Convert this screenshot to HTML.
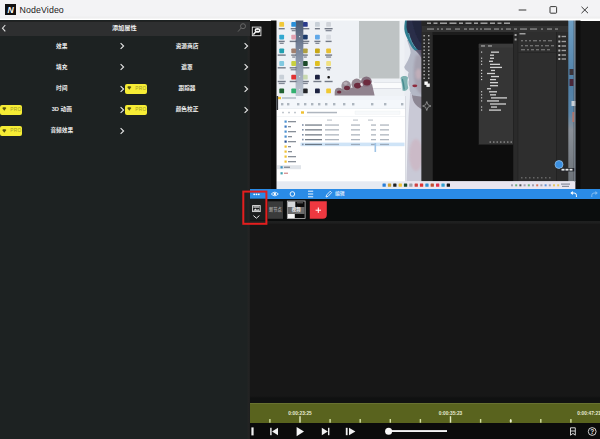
<!DOCTYPE html>
<html><head><meta charset="utf-8">
<style>
html,body{margin:0;padding:0;}
body{width:600px;height:439px;overflow:hidden;background:#161616;position:relative;font-family:"Liberation Sans","Noto Sans CJK SC",sans-serif;}
.abs{position:absolute;}
#title{left:0;top:0;width:600px;height:20.5px;background:linear-gradient(#f3f3f5,#f3f3f5 16px,#efeff0 17px,#efeff0 18.3px,#ffffff 18.9px,#ffffff);}
#title .name{left:19.6px;top:2.6px;font-size:8.8px;color:#1a1a1a;line-height:14px;letter-spacing:0.1px}
#left{left:0;top:20px;width:250px;height:419px;background:linear-gradient(90deg,#1d2222,#1d2222 247.3px,#232424 247.8px,#222323 249.4px,#161616 250px);}
#lhead{left:0;top:20.5px;width:249.5px;height:15.5px;background:linear-gradient(#1f2020,#222323 0.8px,#2e2f30 1.3px,#2e2f30);}
.lt{color:#f0f0f0;font-size:5.7px;line-height:8px;font-weight:bold;white-space:nowrap;transform:translateX(-50%);}
.pro{width:22.3px;height:10px;background:#f6ec35;border-radius:2px;}
.pro span{position:absolute;left:10.2px;top:2.2px;font-size:4.8px;line-height:6px;color:#a39c2a;letter-spacing:0.3px}
#mid{left:249.5px;top:20.5px;width:350.5px;height:170px;background:#161616;}
#blue{left:249.7px;top:188.8px;width:351px;height:10.3px;background:#2a8be6;}
#layer{left:249.7px;top:199px;width:351px;height:21.6px;background:#0b0d0d;}
#tl{left:249.7px;top:220.6px;width:351px;height:183px;background:linear-gradient(#1f2020,#1e1f1f 2px,#171717 3.5px,#171717 175px,#101111 177px,#101111);}
#ruler{left:249.7px;top:403.4px;width:351px;height:19.3px;background:#59631e;border-top:0.8px solid #687230;box-sizing:border-box}
.rl{top:410.6px;transform:translateX(-50%);font-size:4.8px;line-height:6px;color:#e6ead2;white-space:nowrap;font-weight:bold}
#ctrl{left:249.7px;top:422.7px;width:351px;height:16.3px;background:#0b0b0b;}
</style></head><body>
<div id="title" class="abs"><div class="abs name">NodeVideo</div></div>
<div id="left" class="abs"></div>
<div id="lhead" class="abs"></div>
<div class="abs lt" style="left:124.3px;top:24px;font-size:6.2px;color:#f0f0f0">添加属性</div>
<svg class="abs" style="left:1px;top:24px" width="6" height="9" viewBox="0 0 6 9"><polyline points="4.3,1 1.5,4.2 4.3,7.4" fill="none" stroke="#e0e0e0" stroke-width="1.1"/></svg>
<div class="abs lt" style="left:61.8px;top:41.6px">效果</div>
<svg class="abs" style="left:118.7px;top:42.1px" width="6" height="8" viewBox="0 0 6 8"><polyline points="1.6,1.2 4.6,4 1.6,6.8" fill="none" stroke="#e8e8e8" stroke-width="1.1"/></svg>
<div class="abs lt" style="left:187px;top:41.6px">资源商店</div>
<svg class="abs" style="left:243px;top:42.1px" width="6" height="8" viewBox="0 0 6 8"><polyline points="1.6,1.2 4.6,4 1.6,6.8" fill="none" stroke="#e8e8e8" stroke-width="1.1"/></svg>
<div class="abs lt" style="left:61.8px;top:62.9px">填充</div>
<svg class="abs" style="left:118.7px;top:63.4px" width="6" height="8" viewBox="0 0 6 8"><polyline points="1.6,1.2 4.6,4 1.6,6.8" fill="none" stroke="#e8e8e8" stroke-width="1.1"/></svg>
<div class="abs lt" style="left:187px;top:62.9px">遮罩</div>
<svg class="abs" style="left:243px;top:63.4px" width="6" height="8" viewBox="0 0 6 8"><polyline points="1.6,1.2 4.6,4 1.6,6.8" fill="none" stroke="#e8e8e8" stroke-width="1.1"/></svg>
<div class="abs lt" style="left:61.8px;top:84.1px">时间</div>
<svg class="abs" style="left:118.7px;top:84.6px" width="6" height="8" viewBox="0 0 6 8"><polyline points="1.6,1.2 4.6,4 1.6,6.8" fill="none" stroke="#e8e8e8" stroke-width="1.1"/></svg>
<div class="abs lt" style="left:187px;top:84.1px">跟踪器</div>
<svg class="abs" style="left:243px;top:84.6px" width="6" height="8" viewBox="0 0 6 8"><polyline points="1.6,1.2 4.6,4 1.6,6.8" fill="none" stroke="#e8e8e8" stroke-width="1.1"/></svg>
<div class="abs pro" style="left:125px;top:83.7px"><svg class="abs" style="left:2.2px;top:2.8px" width="4.6" height="4.6" viewBox="0 0 6 6"><path d="M0.3,1.2 L5.7,1.2 L3,4.9 Z M1.6,0.2 L4.4,0.2 L5.7,1.2 L0.3,1.2 Z" fill="#5a5510"/></svg><span>PRO</span></div>
<div class="abs lt" style="left:61.8px;top:105.1px">3D 动画</div>
<svg class="abs" style="left:118.7px;top:105.6px" width="6" height="8" viewBox="0 0 6 8"><polyline points="1.6,1.2 4.6,4 1.6,6.8" fill="none" stroke="#e8e8e8" stroke-width="1.1"/></svg>
<div class="abs lt" style="left:187px;top:105.1px">颜色校正</div>
<svg class="abs" style="left:243px;top:105.6px" width="6" height="8" viewBox="0 0 6 8"><polyline points="1.6,1.2 4.6,4 1.6,6.8" fill="none" stroke="#e8e8e8" stroke-width="1.1"/></svg>
<div class="abs pro" style="left:0px;top:104.7px"><svg class="abs" style="left:2.2px;top:2.8px" width="4.6" height="4.6" viewBox="0 0 6 6"><path d="M0.3,1.2 L5.7,1.2 L3,4.9 Z M1.6,0.2 L4.4,0.2 L5.7,1.2 L0.3,1.2 Z" fill="#5a5510"/></svg><span>PRO</span></div>
<div class="abs pro" style="left:125px;top:104.7px"><svg class="abs" style="left:2.2px;top:2.8px" width="4.6" height="4.6" viewBox="0 0 6 6"><path d="M0.3,1.2 L5.7,1.2 L3,4.9 Z M1.6,0.2 L4.4,0.2 L5.7,1.2 L0.3,1.2 Z" fill="#5a5510"/></svg><span>PRO</span></div>
<div class="abs lt" style="left:61.8px;top:126.2px">音频效果</div>
<svg class="abs" style="left:118.7px;top:126.7px" width="6" height="8" viewBox="0 0 6 8"><polyline points="1.6,1.2 4.6,4 1.6,6.8" fill="none" stroke="#e8e8e8" stroke-width="1.1"/></svg>
<div class="abs pro" style="left:0px;top:125.80000000000001px"><svg class="abs" style="left:2.2px;top:2.8px" width="4.6" height="4.6" viewBox="0 0 6 6"><path d="M0.3,1.2 L5.7,1.2 L3,4.9 Z M1.6,0.2 L4.4,0.2 L5.7,1.2 L0.3,1.2 Z" fill="#5a5510"/></svg><span>PRO</span></div>
<div id="mid" class="abs"></div>
<!--PV-->
<svg class="abs" id="pv" style="left:0;top:0" width="600" height="439" viewBox="0 0 600 439">
<defs>
<linearGradient id="gstripe" x1="0" y1="0" x2="0" y2="1"><stop offset="0" stop-color="#44546e"/><stop offset="0.5" stop-color="#8793a8"/><stop offset="1" stop-color="#c3cad4"/></linearGradient>
<linearGradient id="gskin" x1="0" y1="0" x2="0" y2="1"><stop offset="0" stop-color="#b4c0cc"/><stop offset="0.35" stop-color="#c6c8d2"/><stop offset="0.5" stop-color="#9a8e98"/><stop offset="0.62" stop-color="#cfccd6"/><stop offset="1" stop-color="#d8ccd4"/></linearGradient>
<linearGradient id="gphoto" x1="0" y1="0" x2="0" y2="1"><stop offset="0" stop-color="#6f9fc4"/><stop offset="0.4" stop-color="#4f7fa6"/><stop offset="0.58" stop-color="#5a86aa"/><stop offset="0.68" stop-color="#8a9098"/><stop offset="1" stop-color="#6c7278"/></linearGradient>
<filter id="b1"><feGaussianBlur stdDeviation="0.5"/></filter>
<filter id="b2"><feGaussianBlur stdDeviation="1.2"/></filter>
<filter id="b3"><feGaussianBlur stdDeviation="0.7"/></filter>
<filter id="b0"><feGaussianBlur stdDeviation="0.35"/></filter>
<clipPath id="pvclip"><rect x="271" y="20.5" width="309.5" height="168.5"/></clipPath>
</defs>
<g clip-path="url(#pvclip)"><g filter="url(#b0)">
<rect x="270" y="18" width="154" height="173" fill="#eef1f5"/>
<rect x="295.6" y="18" width="7.6" height="79" fill="url(#gstripe)"/>
<rect x="359" y="21" width="40.5" height="57.5" fill="#bec3c4"/>
<rect x="404.5" y="18" width="19" height="165" fill="#e9ecf2"/>
<path d="M410,93 C410,100 409,108 408.5,118 C408,135 407,160 406.5,183 L424,183 L424,93 Z" fill="#c9c9d6" filter="url(#b1)"/>
<path d="M412,93 C412,100 414,106 424,110 L424,93 Z" fill="#8d8794" filter="url(#b1)"/>
<ellipse cx="416" cy="155" rx="7" ry="16" fill="#ccb6c2" opacity="0.75" filter="url(#b2)"/>
<path d="M407,40 C409,46 410.8,50 410.6,53 C409.5,58 406.5,63 404.2,67 C404.8,70 407.5,71 408.6,72.3 C407.6,75 407.8,77.5 409,79.5 C408,82.5 408.6,85 409.6,87 C409,90.5 410.5,93.5 413,95.5 L424,97 L424,40 Z" fill="#b4b8c6" filter="url(#b1)"/>
<path d="M416,55 C414,62 413,70 414,80 C415,88 418,93 424,96 L424,55 Z" fill="#a09aa8" opacity="0.7" filter="url(#b2)"/>
<ellipse cx="418.5" cy="74" rx="3.2" ry="5.5" fill="#c9b2bc" opacity="0.75" filter="url(#b2)"/>
<path d="M405.4,18 L424,18 L424,60 C421.5,57 419.5,53 416.5,51 C414,50.5 411.5,47.5 409.5,43 C407,38 404.4,33 404.3,29 C404.2,25 405,21 405.4,18 Z" fill="#2f7f92" filter="url(#b1)"/>
<path d="M407,18 L424,18 L424,58 C421.5,55 420,51 417,49 C414.5,48 412.5,45 411,41 C408.5,35 406.6,30 406.5,27 C406.4,24 406.8,21 407,18 Z" fill="#2a2e4a" filter="url(#b1)"/>
<path d="M412,20 C414,30 416,38 424,48 L424,20 Z" fill="#23253e" filter="url(#b1)"/>
<path d="M408.6,33 C410,39 412.5,44.5 416,48.5" stroke="#6cc4d4" stroke-width="0.9" fill="none" opacity="0.85" filter="url(#b1)"/>
<path d="M415,50 C418,53 421,57 424,62 L424,50 Z" fill="#6a5a70" opacity="0.8" filter="url(#b1)"/>
<ellipse cx="414.8" cy="85.8" rx="2.5" ry="1.4" fill="#8e2a3c" filter="url(#b1)"/>
<rect x="372" y="82.6" width="29" height="5.6" fill="#fafbfc" opacity="0.95"/>
<rect x="372" y="88" width="29" height="0.7" fill="#cdd0d8" opacity="0.9"/>
<rect x="374" y="82.3" width="27" height="0.6" fill="#d4d8de" opacity="0.9"/>
<path d="M400.5,78 C402,75.5 406,75.5 408,77.5 C407,81 407.5,85 408.3,88 C407,91 404,91.5 402.5,90.5 C402.5,86 401.5,82 400.5,78 Z" fill="#7fb2b2" filter="url(#b1)"/>
<path d="M402.3,79 C403.5,83 404,86.5 404.2,89.5" stroke="#3f868c" stroke-width="1.4" fill="none" opacity="0.85" filter="url(#b1)"/>
<g filter="url(#b3)">
<path d="M334.7,92 C337,88 341,88 344,89.5 L350,88 L372,84 L374.6,95.6 L334.7,95.6 Z" fill="#90828e"/>
<ellipse cx="338.7" cy="91.3" rx="3.8" ry="3.6" fill="#8f858d"/>
<ellipse cx="346.2" cy="86" rx="4.8" ry="5.4" fill="#9a9099"/>
<ellipse cx="356.7" cy="84.2" rx="5.2" ry="5.6" fill="#94868f"/>
<ellipse cx="366.4" cy="81.6" rx="5.4" ry="5.2" fill="#84707e"/>
<ellipse cx="339.2" cy="92" rx="2.2" ry="1.6" fill="#6c2a3e"/>
<ellipse cx="347" cy="88" rx="3" ry="2.2" fill="#6c2a3e"/>
<ellipse cx="357.6" cy="85.6" rx="3.6" ry="2.8" fill="#6c2a3e"/>
<ellipse cx="367" cy="82.6" rx="3.8" ry="3" fill="#6c2a3e"/>
<ellipse cx="361.5" cy="84.5" rx="1.2" ry="1.4" fill="#e8dce2"/>
<ellipse cx="345.5" cy="83.5" rx="2" ry="1.4" fill="#b8aeb6"/>
</g>
<rect x="279.3" y="22.0" width="4.8" height="4.8" rx="0.9" fill="#f0c838"/>
<rect x="278.7" y="28.0" width="6" height="1.4" fill="#4a5262" opacity="0.75"/>
<rect x="291.3" y="22.0" width="4.8" height="4.8" rx="0.9" fill="#2a8fd8"/>
<rect x="290.7" y="28.0" width="6" height="1.4" fill="#4a5262" opacity="0.75"/>
<rect x="291.7" y="30.0" width="4" height="1.3" fill="#4a5262" opacity="0.65"/>
<rect x="302.9" y="22.0" width="4.8" height="4.8" rx="0.9" fill="#2a3a8c"/>
<rect x="301.3" y="28.0" width="8" height="1.4" fill="#4a5262" opacity="0.75"/>
<rect x="315.0" y="22.0" width="4.8" height="4.8" rx="0.9" fill="#c8d0d8"/>
<rect x="314.9" y="28.0" width="5" height="1.4" fill="#4a5262" opacity="0.75"/>
<rect x="326.2" y="22.0" width="4.8" height="4.8" rx="0.9" fill="#d0d4da"/>
<rect x="324.6" y="28.0" width="8" height="1.4" fill="#4a5262" opacity="0.75"/>
<rect x="325.6" y="30.0" width="6" height="1.3" fill="#4a5262" opacity="0.65"/>
<rect x="279.3" y="34.7" width="4.8" height="4.8" rx="0.9" fill="#30a8d0"/>
<rect x="278.7" y="40.7" width="6" height="1.4" fill="#4a5262" opacity="0.75"/>
<rect x="279.7" y="42.7" width="4" height="1.3" fill="#4a5262" opacity="0.65"/>
<rect x="291.3" y="34.7" width="4.8" height="4.8" rx="0.9" fill="#e0a0b0"/>
<rect x="289.7" y="40.7" width="8" height="1.4" fill="#4a5262" opacity="0.75"/>
<rect x="302.9" y="34.7" width="4.8" height="4.8" rx="0.9" fill="#1a3a6c"/>
<rect x="301.3" y="40.7" width="8" height="1.4" fill="#4a5262" opacity="0.75"/>
<rect x="302.3" y="42.7" width="6" height="1.3" fill="#4a5262" opacity="0.65"/>
<rect x="315.0" y="34.7" width="4.8" height="4.8" rx="0.9" fill="#60a8e8"/>
<rect x="314.4" y="40.7" width="6" height="1.4" fill="#4a5262" opacity="0.75"/>
<rect x="315.4" y="42.7" width="4" height="1.3" fill="#4a5262" opacity="0.65"/>
<rect x="326.2" y="34.7" width="4.8" height="4.8" rx="0.9" fill="#d8dce2"/>
<rect x="325.6" y="40.7" width="6" height="1.4" fill="#4a5262" opacity="0.75"/>
<rect x="279.3" y="48.4" width="4.8" height="4.8" rx="0.9" fill="#20a0b0"/>
<rect x="277.7" y="54.4" width="8" height="1.4" fill="#4a5262" opacity="0.75"/>
<rect x="291.3" y="48.4" width="4.8" height="4.8" rx="0.9" fill="#a08070"/>
<rect x="291.2" y="54.4" width="5" height="1.4" fill="#4a5262" opacity="0.75"/>
<rect x="292.2" y="56.4" width="3" height="1.3" fill="#4a5262" opacity="0.65"/>
<rect x="302.9" y="48.4" width="4.8" height="4.8" rx="0.9" fill="#b0a040"/>
<rect x="302.8" y="54.4" width="5" height="1.4" fill="#4a5262" opacity="0.75"/>
<rect x="303.8" y="56.4" width="3" height="1.3" fill="#4a5262" opacity="0.65"/>
<rect x="315.0" y="48.4" width="4.8" height="4.8" rx="0.9" fill="#c8a818"/>
<rect x="314.9" y="54.4" width="5" height="1.4" fill="#4a5262" opacity="0.75"/>
<rect x="326.2" y="48.4" width="4.8" height="4.8" rx="0.9" fill="#e8c030"/>
<rect x="325.1" y="54.4" width="7" height="1.4" fill="#4a5262" opacity="0.75"/>
<rect x="326.1" y="56.4" width="5" height="1.3" fill="#4a5262" opacity="0.65"/>
<rect x="279.3" y="61.1" width="4.8" height="4.8" rx="0.9" fill="#80c8e0"/>
<rect x="277.7" y="67.1" width="8" height="1.4" fill="#4a5262" opacity="0.75"/>
<rect x="291.3" y="61.1" width="4.8" height="4.8" rx="0.9" fill="#c8d040"/>
<rect x="289.7" y="67.1" width="8" height="1.4" fill="#4a5262" opacity="0.75"/>
<rect x="290.7" y="69.1" width="6" height="1.3" fill="#4a5262" opacity="0.65"/>
<rect x="302.9" y="61.1" width="4.8" height="4.8" rx="0.9" fill="#1c4a2c"/>
<rect x="301.3" y="67.1" width="8" height="1.4" fill="#4a5262" opacity="0.75"/>
<rect x="315.0" y="61.1" width="4.8" height="4.8" rx="0.9" fill="#e0c020"/>
<rect x="314.4" y="67.1" width="6" height="1.4" fill="#4a5262" opacity="0.75"/>
<rect x="326.2" y="61.1" width="4.8" height="4.8" rx="0.9" fill="#f0e080"/>
<rect x="326.1" y="67.1" width="5" height="1.4" fill="#4a5262" opacity="0.75"/>
<rect x="327.1" y="69.1" width="3" height="1.3" fill="#4a5262" opacity="0.65"/>
<rect x="279.3" y="74.8" width="4.8" height="4.8" rx="0.9" fill="#c8d0d8"/>
<rect x="277.7" y="80.8" width="8" height="1.4" fill="#4a5262" opacity="0.75"/>
<rect x="278.7" y="82.8" width="6" height="1.3" fill="#4a5262" opacity="0.65"/>
<rect x="291.3" y="74.8" width="4.8" height="4.8" rx="0.9" fill="#e03030"/>
<rect x="289.7" y="80.8" width="8" height="1.4" fill="#4a5262" opacity="0.75"/>
<rect x="302.9" y="74.8" width="4.8" height="4.8" rx="0.9" fill="#c8d8b0"/>
<rect x="301.8" y="80.8" width="7" height="1.4" fill="#4a5262" opacity="0.75"/>
<rect x="302.8" y="82.8" width="5" height="1.3" fill="#4a5262" opacity="0.65"/>
<rect x="315.0" y="74.8" width="4.8" height="4.8" rx="0.9" fill="#1a2040"/>
<rect x="313.4" y="80.8" width="8" height="1.4" fill="#4a5262" opacity="0.75"/>
<rect x="327.4" y="76.0" width="2.5" height="2.5" rx="0.9" fill="#181818"/>
<rect x="324.6" y="80.8" width="8" height="1.4" fill="#4a5262" opacity="0.75"/>
<rect x="279.3" y="88.5" width="4.8" height="4.8" rx="0.9" fill="#206030"/>
<rect x="291.3" y="88.5" width="4.8" height="4.8" rx="0.9" fill="#30b070"/>
<rect x="302.9" y="88.5" width="4.8" height="4.8" rx="0.9" fill="#202428"/>
<rect x="315.0" y="88.5" width="4.8" height="4.8" rx="0.9" fill="#1a2040"/>
<rect x="326.2" y="88.5" width="4.8" height="4.8" rx="0.9" fill="#f0c830"/>
<rect x="296.4" y="18" width="6.8" height="79" fill="url(#gstripe)" opacity="0.85"/>
<rect x="299" y="36" width="1.2" height="1.2" fill="#e8ecf0" opacity="0.8"/>
<rect x="299" y="49" width="1.2" height="1.2" fill="#e8ecf0" opacity="0.8"/>
<rect x="299" y="62" width="1.2" height="1.2" fill="#e8ecf0" opacity="0.8"/>
<rect x="299" y="76" width="1.2" height="1.2" fill="#e8ecf0" opacity="0.8"/>
<rect x="299" y="89" width="1.2" height="1.2" fill="#e8ecf0" opacity="0.8"/>
<rect x="276.5" y="96" width="129" height="86" fill="#ffffff"/>
<rect x="276.5" y="96" width="129" height="4" fill="#f1f4f9"/>
<rect x="276.5" y="100" width="129" height="8.5" fill="#f4f7fb"/>
<rect x="276.5" y="108.3" width="129" height="0.5" fill="#dfe4ea"/>
<rect x="276.5" y="116.5" width="129" height="0.5" fill="#e6eaef"/>
<rect x="278" y="96.8" width="3" height="2.4" fill="#f0c030"/>
<rect x="282" y="97.3" width="14" height="1.4" fill="#8090a0" opacity="0.6"/>
<rect x="281" y="103" width="2.4" height="2.4" fill="#7f8a98" opacity="0.6"/>
<rect x="287" y="103" width="2.4" height="2.4" fill="#7f8a98" opacity="0.6"/>
<rect x="297" y="103" width="2.4" height="2.4" fill="#7f8a98" opacity="0.6"/>
<rect x="304" y="103" width="2.4" height="2.4" fill="#7f8a98" opacity="0.6"/>
<rect x="311" y="103" width="2.4" height="2.4" fill="#7f8a98" opacity="0.6"/>
<rect x="318" y="103" width="2.4" height="2.4" fill="#7f8a98" opacity="0.6"/>
<rect x="325" y="103" width="2.4" height="2.4" fill="#7f8a98" opacity="0.6"/>
<rect x="333" y="103" width="2.4" height="2.4" fill="#7f8a98" opacity="0.6"/>
<rect x="343" y="103" width="2.4" height="2.4" fill="#7f8a98" opacity="0.6"/>
<rect x="352" y="103" width="2.4" height="2.4" fill="#7f8a98" opacity="0.6"/>
<rect x="371" y="103" width="2.4" height="2.4" fill="#7f8a98" opacity="0.6"/>
<rect x="384" y="103" width="2.4" height="2.4" fill="#7f8a98" opacity="0.6"/>
<rect x="401" y="103" width="2.4" height="2.4" fill="#7f8a98" opacity="0.6"/>
<rect x="301" y="111.3" width="3" height="2.4" fill="#f0c030"/>
<rect x="307" y="111.8" width="30" height="1.5" fill="#7a8594" opacity="0.6"/>
<rect x="282" y="111.8" width="2" height="1.5" fill="#9aa3ae" opacity="0.6"/>
<rect x="288" y="111.8" width="2" height="1.5" fill="#9aa3ae" opacity="0.6"/>
<rect x="294" y="111.8" width="2" height="1.5" fill="#9aa3ae" opacity="0.6"/>
<rect x="355" y="111" width="45" height="3.2" fill="#f7f9fb" stroke="#e3e7ec" stroke-width="0.3"/>
<rect x="327" y="119.5" width="5" height="1.2" fill="#9aa3ae" opacity="0.6"/>
<rect x="353" y="119.5" width="5" height="1.2" fill="#9aa3ae" opacity="0.6"/>
<rect x="368" y="119.5" width="5" height="1.2" fill="#9aa3ae" opacity="0.6"/>
<rect x="284.5" y="120.5" width="2.2" height="2.2" fill="#4a90d0"/>
<rect x="288" y="121.0" width="8" height="1.3" fill="#555f6c" opacity="0.7"/>
<rect x="284.5" y="125.5" width="2.2" height="2.2" fill="#3a78c0"/>
<rect x="288" y="126.0" width="3" height="1.3" fill="#555f6c" opacity="0.7"/>
<rect x="284.5" y="130.5" width="2.2" height="2.2" fill="#4a90d0"/>
<rect x="288" y="131.0" width="8" height="1.3" fill="#555f6c" opacity="0.7"/>
<rect x="284.5" y="135.5" width="2.2" height="2.2" fill="#4a90d0"/>
<rect x="288" y="136.0" width="4" height="1.3" fill="#555f6c" opacity="0.7"/>
<rect x="284.5" y="140.5" width="2.2" height="2.2" fill="#2a5090"/>
<rect x="288" y="141.0" width="8" height="1.3" fill="#555f6c" opacity="0.7"/>
<rect x="284.5" y="145.5" width="2.2" height="2.2" fill="#f0c030"/>
<rect x="288" y="146.0" width="3" height="1.3" fill="#555f6c" opacity="0.7"/>
<rect x="284.5" y="150.5" width="2.2" height="2.2" fill="#f0c030"/>
<rect x="288" y="151.0" width="4" height="1.3" fill="#555f6c" opacity="0.7"/>
<rect x="284.5" y="155.5" width="2.2" height="2.2" fill="#f0c030"/>
<rect x="288" y="156.0" width="8" height="1.3" fill="#555f6c" opacity="0.7"/>
<rect x="284.5" y="160.5" width="2.2" height="2.2" fill="#f0c030"/>
<rect x="288" y="161.0" width="8" height="1.3" fill="#555f6c" opacity="0.7"/>
<rect x="277" y="165.2" width="24" height="4" fill="#e1e5ea"/>
<rect x="280.5" y="166.2" width="2.2" height="2.2" fill="#3a90c0"/><rect x="284" y="166.6" width="6" height="1.3" fill="#555f6c" opacity="0.7"/>
<rect x="280.5" y="172.2" width="2.2" height="2.2" fill="#40a0b0"/><rect x="284" y="172.6" width="4" height="1.3" fill="#c06060" opacity="0.7"/>
<rect x="302" y="124.2" width="1.6" height="1.6" fill="#8090a8"/>
<rect x="305" y="124.4" width="17" height="1.3" fill="#4a5462" opacity="0.75"/>
<rect x="325" y="124.4" width="14" height="1.3" fill="#7a8594" opacity="0.6"/>
<rect x="351" y="124.4" width="9" height="1.3" fill="#7a8594" opacity="0.6"/>
<rect x="371" y="124.4" width="5" height="1.3" fill="#7a8594" opacity="0.6"/>
<rect x="380" y="124.4" width="9" height="1.3" fill="#7a8594" opacity="0.6"/>
<rect x="302" y="129" width="1.6" height="1.6" fill="#8090a8"/>
<rect x="305" y="129.2" width="17" height="1.3" fill="#4a5462" opacity="0.75"/>
<rect x="325" y="129.2" width="14" height="1.3" fill="#7a8594" opacity="0.6"/>
<rect x="351" y="129.2" width="9" height="1.3" fill="#7a8594" opacity="0.6"/>
<rect x="371" y="129.2" width="5" height="1.3" fill="#7a8594" opacity="0.6"/>
<rect x="380" y="129.2" width="9" height="1.3" fill="#7a8594" opacity="0.6"/>
<rect x="302" y="134" width="1.6" height="1.6" fill="#8090a8"/>
<rect x="305" y="134.2" width="17" height="1.3" fill="#4a5462" opacity="0.75"/>
<rect x="325" y="134.2" width="14" height="1.3" fill="#7a8594" opacity="0.6"/>
<rect x="351" y="134.2" width="9" height="1.3" fill="#7a8594" opacity="0.6"/>
<rect x="371" y="134.2" width="5" height="1.3" fill="#7a8594" opacity="0.6"/>
<rect x="380" y="134.2" width="9" height="1.3" fill="#7a8594" opacity="0.6"/>
<rect x="302" y="138.8" width="1.6" height="1.6" fill="#8090a8"/>
<rect x="305" y="139.0" width="17" height="1.3" fill="#4a5462" opacity="0.75"/>
<rect x="325" y="139.0" width="14" height="1.3" fill="#7a8594" opacity="0.6"/>
<rect x="351" y="139.0" width="9" height="1.3" fill="#7a8594" opacity="0.6"/>
<rect x="371" y="139.0" width="5" height="1.3" fill="#7a8594" opacity="0.6"/>
<rect x="380" y="139.0" width="9" height="1.3" fill="#7a8594" opacity="0.6"/>
<rect x="300.5" y="142.6" width="104" height="3.6" fill="#cfe4f7"/>
<rect x="302" y="143.6" width="1.6" height="1.6" fill="#8090a8"/>
<rect x="305" y="143.79999999999998" width="17" height="1.3" fill="#4a5462" opacity="0.75"/>
<rect x="325" y="143.79999999999998" width="14" height="1.3" fill="#7a8594" opacity="0.6"/>
<rect x="351" y="143.79999999999998" width="9" height="1.3" fill="#7a8594" opacity="0.6"/>
<rect x="371" y="143.79999999999998" width="5" height="1.3" fill="#7a8594" opacity="0.6"/>
<rect x="380" y="143.79999999999998" width="9" height="1.3" fill="#7a8594" opacity="0.6"/>
<rect x="374.5" y="143" width="1.6" height="9" fill="#9fc4e6"/>
<rect x="405" y="96" width="0.6" height="85.5" fill="#c8ccd4"/>
<rect x="421.6" y="18" width="146.9" height="164" fill="#2c2c2c"/>
<rect x="421.6" y="18" width="146.9" height="8" fill="#262626"/>
<rect x="422.3" y="26" width="146.2" height="6" fill="#333333"/>
<rect x="432.5" y="32" width="80.5" height="150" fill="#0f0f0f"/>
<rect x="432.5" y="32" width="80.5" height="3" fill="#1d1d1d"/>
<rect x="421.6" y="32" width="10.9" height="150" fill="#2b2b2b"/>
<rect x="423.4" y="35" width="1.5" height="1.5" fill="#c8c8c8" opacity="0.8"/><rect x="428" y="35" width="1.5" height="1.5" fill="#c8c8c8" opacity="0.8"/>
<rect x="423.4" y="39" width="1.5" height="1.5" fill="#c8c8c8" opacity="0.8"/><rect x="428" y="39" width="1.5" height="1.5" fill="#c8c8c8" opacity="0.8"/>
<rect x="423.4" y="42.5" width="1.5" height="1.5" fill="#c8c8c8" opacity="0.8"/><rect x="428" y="42.5" width="1.5" height="1.5" fill="#c8c8c8" opacity="0.8"/>
<rect x="423.4" y="46" width="1.5" height="1.5" fill="#c8c8c8" opacity="0.8"/><rect x="428" y="46" width="1.5" height="1.5" fill="#c8c8c8" opacity="0.8"/>
<rect x="423.4" y="49.5" width="1.5" height="1.5" fill="#c8c8c8" opacity="0.8"/><rect x="428" y="49.5" width="1.5" height="1.5" fill="#c8c8c8" opacity="0.8"/>
<rect x="423.4" y="53" width="1.5" height="1.5" fill="#c8c8c8" opacity="0.8"/><rect x="428" y="53" width="1.5" height="1.5" fill="#c8c8c8" opacity="0.8"/>
<rect x="423.4" y="56.5" width="1.5" height="1.5" fill="#c8c8c8" opacity="0.8"/><rect x="428" y="56.5" width="1.5" height="1.5" fill="#c8c8c8" opacity="0.8"/>
<rect x="423.4" y="60" width="1.5" height="1.5" fill="#c8c8c8" opacity="0.8"/><rect x="428" y="60" width="1.5" height="1.5" fill="#c8c8c8" opacity="0.8"/>
<rect x="423.4" y="63.5" width="1.5" height="1.5" fill="#c8c8c8" opacity="0.8"/><rect x="428" y="63.5" width="1.5" height="1.5" fill="#c8c8c8" opacity="0.8"/>
<rect x="423.4" y="67" width="1.5" height="1.5" fill="#c8c8c8" opacity="0.8"/><rect x="428" y="67" width="1.5" height="1.5" fill="#c8c8c8" opacity="0.8"/>
<rect x="423.4" y="70.5" width="1.5" height="1.5" fill="#c8c8c8" opacity="0.8"/><rect x="428" y="70.5" width="1.5" height="1.5" fill="#c8c8c8" opacity="0.8"/>
<rect x="423.4" y="74" width="1.5" height="1.5" fill="#c8c8c8" opacity="0.8"/><rect x="428" y="74" width="1.5" height="1.5" fill="#c8c8c8" opacity="0.8"/>
<rect x="423.4" y="77.5" width="1.5" height="1.5" fill="#c8c8c8" opacity="0.8"/><rect x="428" y="77.5" width="1.5" height="1.5" fill="#c8c8c8" opacity="0.8"/>
<rect x="424.4" y="81.5" width="3.4" height="3.4" fill="#ffffff"/><rect x="426.4" y="83.5" width="3.4" height="3.4" fill="#f0f0f0"/>
<path d="M426.8,101.5 L428,104.8 L431,106 L428,107.2 L426.8,110.5 L425.6,107.2 L422.6,106 L425.6,104.8 Z" fill="none" stroke="#bdbdbd" stroke-width="0.6"/>
<rect x="427" y="22.5" width="4" height="1.4" fill="#d8d8d8" opacity="0.75"/>
<rect x="433.5" y="22.5" width="4" height="1.4" fill="#d8d8d8" opacity="0.75"/>
<rect x="440.0" y="22.5" width="7" height="1.4" fill="#d8d8d8" opacity="0.75"/>
<rect x="449.5" y="22.5" width="7" height="1.4" fill="#d8d8d8" opacity="0.75"/>
<rect x="459.0" y="22.5" width="4" height="1.4" fill="#d8d8d8" opacity="0.75"/>
<rect x="465.5" y="22.5" width="6" height="1.4" fill="#d8d8d8" opacity="0.75"/>
<rect x="474.0" y="22.5" width="4" height="1.4" fill="#d8d8d8" opacity="0.75"/>
<rect x="480.5" y="22.5" width="7" height="1.4" fill="#d8d8d8" opacity="0.75"/>
<rect x="490.0" y="22.5" width="5" height="1.4" fill="#d8d8d8" opacity="0.75"/>
<rect x="497.5" y="22.5" width="4" height="1.4" fill="#d8d8d8" opacity="0.75"/>
<rect x="504.0" y="22.5" width="6" height="1.4" fill="#d8d8d8" opacity="0.75"/>
<rect x="427" y="28.3" width="7" height="1.5" fill="#bdbdbd" opacity="0.55"/>
<rect x="437" y="28.3" width="2" height="1.5" fill="#bdbdbd" opacity="0.55"/>
<rect x="441" y="28.3" width="2" height="1.5" fill="#bdbdbd" opacity="0.55"/>
<rect x="446" y="28.3" width="5" height="1.5" fill="#bdbdbd" opacity="0.55"/>
<rect x="455" y="28.3" width="5" height="1.5" fill="#bdbdbd" opacity="0.55"/>
<rect x="464" y="28.3" width="3" height="1.5" fill="#bdbdbd" opacity="0.55"/>
<rect x="469" y="28.3" width="5" height="1.5" fill="#bdbdbd" opacity="0.55"/>
<rect x="476" y="28.3" width="2" height="1.5" fill="#bdbdbd" opacity="0.55"/>
<rect x="480" y="28.3" width="2" height="1.5" fill="#bdbdbd" opacity="0.55"/>
<rect x="484" y="28.3" width="7" height="1.5" fill="#bdbdbd" opacity="0.55"/>
<rect x="494" y="28.3" width="5" height="1.5" fill="#bdbdbd" opacity="0.55"/>
<rect x="501" y="28.3" width="2" height="1.5" fill="#bdbdbd" opacity="0.55"/>
<rect x="506" y="28.3" width="5" height="1.5" fill="#bdbdbd" opacity="0.55"/>
<rect x="514" y="28.3" width="3" height="1.5" fill="#bdbdbd" opacity="0.55"/>
<rect x="520" y="28.3" width="7" height="1.5" fill="#bdbdbd" opacity="0.55"/>
<rect x="530" y="28.3" width="7" height="1.5" fill="#bdbdbd" opacity="0.55"/>
<rect x="541" y="28.3" width="2" height="1.5" fill="#bdbdbd" opacity="0.55"/>
<rect x="547" y="28.3" width="5" height="1.5" fill="#bdbdbd" opacity="0.55"/>
<rect x="555" y="28.3" width="3" height="1.5" fill="#bdbdbd" opacity="0.55"/>
<rect x="478.8" y="43.8" width="34.2" height="100.8" fill="#343434"/>
<rect x="478.8" y="43.8" width="34.2" height="4" fill="#3a3a3a"/>
<rect x="481" y="45.3" width="4" height="1.3" fill="#cfcfcf" opacity="0.7"/><rect x="488" y="45.3" width="4" height="1.3" fill="#cfcfcf" opacity="0.7"/>
<rect x="481" y="51.5" width="1.2" height="1.2" fill="#e8e8e8" opacity="0.85"/>
<rect x="491" y="51.5" width="8" height="1.3" fill="#f0f0f0" opacity="0.85"/>
<rect x="490" y="54.55" width="4" height="1.3" fill="#f0f0f0" opacity="0.85"/>
<rect x="481" y="57.599999999999994" width="1.2" height="1.2" fill="#e8e8e8" opacity="0.85"/>
<rect x="490" y="57.599999999999994" width="4" height="1.3" fill="#f0f0f0" opacity="0.85"/>
<rect x="481" y="60.64999999999999" width="1.2" height="1.2" fill="#e8e8e8" opacity="0.85"/>
<rect x="489" y="60.64999999999999" width="4" height="1.3" fill="#f0f0f0" opacity="0.85"/>
<rect x="481" y="63.69999999999999" width="1.2" height="1.2" fill="#e8e8e8" opacity="0.85"/>
<rect x="490" y="63.69999999999999" width="10" height="1.3" fill="#f0f0f0" opacity="0.85"/>
<rect x="490" y="66.74999999999999" width="12" height="1.3" fill="#f0f0f0" opacity="0.85"/>
<rect x="481" y="69.79999999999998" width="1.2" height="1.2" fill="#e8e8e8" opacity="0.85"/>
<rect x="491" y="69.79999999999998" width="4" height="1.3" fill="#f0f0f0" opacity="0.85"/>
<rect x="481" y="72.84999999999998" width="1.2" height="1.2" fill="#e8e8e8" opacity="0.85"/>
<rect x="487" y="72.84999999999998" width="8" height="1.3" fill="#f0f0f0" opacity="0.85"/>
<rect x="481" y="75.89999999999998" width="1.2" height="1.2" fill="#e8e8e8" opacity="0.85"/>
<rect x="491" y="75.89999999999998" width="8" height="1.3" fill="#f0f0f0" opacity="0.85"/>
<rect x="481" y="78.94999999999997" width="1.2" height="1.2" fill="#e8e8e8" opacity="0.85"/>
<rect x="490" y="78.94999999999997" width="6" height="1.3" fill="#f0f0f0" opacity="0.85"/>
<rect x="490" y="81.99999999999997" width="8" height="1.3" fill="#f0f0f0" opacity="0.85"/>
<rect x="490" y="85.04999999999997" width="8" height="1.3" fill="#f0f0f0" opacity="0.85"/>
<rect x="487" y="88.09999999999997" width="4" height="1.3" fill="#f0f0f0" opacity="0.85"/>
<rect x="481" y="91.14999999999996" width="1.2" height="1.2" fill="#e8e8e8" opacity="0.85"/>
<rect x="489" y="91.14999999999996" width="8" height="1.3" fill="#f0f0f0" opacity="0.85"/>
<rect x="481" y="94.19999999999996" width="1.2" height="1.2" fill="#e8e8e8" opacity="0.85"/>
<rect x="490" y="94.19999999999996" width="6" height="1.3" fill="#f0f0f0" opacity="0.85"/>
<rect x="481" y="97.24999999999996" width="1.2" height="1.2" fill="#e8e8e8" opacity="0.85"/>
<rect x="491" y="97.24999999999996" width="16" height="1.3" fill="#f0f0f0" opacity="0.85"/>
<rect x="481" y="100.29999999999995" width="1.2" height="1.2" fill="#e8e8e8" opacity="0.85"/>
<rect x="487" y="100.29999999999995" width="12" height="1.3" fill="#f0f0f0" opacity="0.85"/>
<rect x="490" y="103.34999999999995" width="16" height="1.3" fill="#f0f0f0" opacity="0.85"/>
<rect x="481" y="106.39999999999995" width="1.2" height="1.2" fill="#e8e8e8" opacity="0.85"/>
<rect x="491" y="106.39999999999995" width="6" height="1.3" fill="#f0f0f0" opacity="0.85"/>
<rect x="481" y="109.44999999999995" width="1.2" height="1.2" fill="#e8e8e8" opacity="0.85"/>
<rect x="489" y="109.44999999999995" width="12" height="1.3" fill="#f0f0f0" opacity="0.85"/>
<rect x="489.5" y="141.3" width="1.5" height="1.5" fill="#9a9a9a" opacity="0.8"/>
<rect x="493" y="141.3" width="1.5" height="1.5" fill="#9a9a9a" opacity="0.8"/>
<rect x="496.5" y="141.3" width="1.5" height="1.5" fill="#9a9a9a" opacity="0.8"/>
<rect x="500" y="141.3" width="1.5" height="1.5" fill="#9a9a9a" opacity="0.8"/>
<rect x="503.5" y="141.3" width="1.5" height="1.5" fill="#9a9a9a" opacity="0.8"/>
<rect x="507" y="141.3" width="1.5" height="1.5" fill="#9a9a9a" opacity="0.8"/>
<rect x="510.5" y="141.3" width="1.5" height="1.5" fill="#9a9a9a" opacity="0.8"/>
<rect x="513" y="32" width="43.5" height="150" fill="#2e2e2e"/>
<rect x="513" y="32" width="5" height="150" fill="#292929"/>
<rect x="556.5" y="32" width="12" height="150" fill="#2a2a2a"/>
<rect x="513" y="32" width="0.6" height="150" fill="#1e1e1e"/>
<rect x="517.8" y="32" width="0.5" height="150" fill="#202020"/>
<rect x="556.2" y="32" width="0.6" height="150" fill="#1e1e1e"/>
<rect x="518.3" y="52" width="38" height="0.5" fill="#222222"/>
<rect x="519.5" y="33" width="6" height="1.5" fill="#d0d0d0" opacity="0.7"/>
<rect x="514.6" y="34" width="2" height="2" fill="#c0c0c0" opacity="0.8"/>
<rect x="514.6" y="38.5" width="2" height="2" fill="#c0c0c0" opacity="0.8"/>
<rect x="521" y="40" width="2" height="1.4" fill="#b0b0b0" opacity="0.5"/>
<rect x="525" y="40" width="2" height="1.4" fill="#b0b0b0" opacity="0.5"/>
<rect x="529" y="40" width="2" height="1.4" fill="#b0b0b0" opacity="0.5"/>
<rect x="533" y="40" width="4" height="1.4" fill="#b0b0b0" opacity="0.5"/>
<rect x="539" y="40" width="2" height="1.4" fill="#b0b0b0" opacity="0.5"/>
<rect x="543" y="40" width="3" height="1.4" fill="#b0b0b0" opacity="0.5"/>
<rect x="548" y="40" width="4" height="1.4" fill="#b0b0b0" opacity="0.5"/>
<rect x="521" y="45" width="2" height="1.4" fill="#b0b0b0" opacity="0.5"/>
<rect x="525" y="45" width="3" height="1.4" fill="#b0b0b0" opacity="0.5"/>
<rect x="530" y="45" width="3" height="1.4" fill="#b0b0b0" opacity="0.5"/>
<rect x="535" y="45" width="4" height="1.4" fill="#b0b0b0" opacity="0.5"/>
<rect x="541" y="45" width="2" height="1.4" fill="#b0b0b0" opacity="0.5"/>
<rect x="545" y="45" width="4" height="1.4" fill="#b0b0b0" opacity="0.5"/>
<rect x="551" y="45" width="3" height="1.4" fill="#b0b0b0" opacity="0.5"/>
<rect x="521" y="49" width="4" height="1.4" fill="#b0b0b0" opacity="0.5"/>
<rect x="527" y="49" width="2" height="1.4" fill="#b0b0b0" opacity="0.5"/>
<rect x="531" y="49" width="3" height="1.4" fill="#b0b0b0" opacity="0.5"/>
<rect x="536" y="49" width="3" height="1.4" fill="#b0b0b0" opacity="0.5"/>
<rect x="541" y="49" width="4" height="1.4" fill="#b0b0b0" opacity="0.5"/>
<rect x="547" y="49" width="3" height="1.4" fill="#b0b0b0" opacity="0.5"/>
<rect x="558.3" y="35.5" width="2" height="2" fill="#d8d8d8" opacity="0.8"/><rect x="561.6" y="35.8" width="4.4" height="1.4" fill="#d0d0d0" opacity="0.7"/>
<rect x="558.3" y="40.5" width="2" height="2" fill="#d8d8d8" opacity="0.8"/><rect x="561.6" y="40.8" width="4.4" height="1.4" fill="#d0d0d0" opacity="0.7"/>
<rect x="558.3" y="45" width="2" height="2" fill="#d8d8d8" opacity="0.8"/><rect x="561.6" y="45.3" width="4.4" height="1.4" fill="#d0d0d0" opacity="0.7"/>
<rect x="558.3" y="49.5" width="2" height="2" fill="#d8d8d8" opacity="0.8"/><rect x="561.6" y="49.8" width="4.4" height="1.4" fill="#d0d0d0" opacity="0.7"/>
<rect x="558.3" y="54" width="2" height="2" fill="#d8d8d8" opacity="0.8"/><rect x="561.6" y="54.3" width="4.4" height="1.4" fill="#d0d0d0" opacity="0.7"/>
<rect x="558.3" y="58" width="2" height="2" fill="#d8d8d8" opacity="0.8"/><rect x="561.6" y="58.3" width="4.4" height="1.4" fill="#d0d0d0" opacity="0.7"/>
<rect x="521" y="177" width="1.5" height="1.5" fill="#8a8a8a" opacity="0.6"/>
<rect x="525" y="177" width="1.5" height="1.5" fill="#8a8a8a" opacity="0.6"/>
<rect x="529" y="177" width="1.5" height="1.5" fill="#8a8a8a" opacity="0.6"/>
<rect x="533" y="177" width="1.5" height="1.5" fill="#8a8a8a" opacity="0.6"/>
<rect x="537" y="177" width="1.5" height="1.5" fill="#8a8a8a" opacity="0.6"/>
<rect x="541" y="177" width="1.5" height="1.5" fill="#8a8a8a" opacity="0.6"/>
<rect x="545" y="177" width="1.5" height="1.5" fill="#8a8a8a" opacity="0.6"/>
<rect x="549" y="177" width="1.5" height="1.5" fill="#8a8a8a" opacity="0.6"/>
<rect x="568.3" y="18" width="8" height="164" fill="url(#gphoto)"/>
<rect x="573.6" y="18" width="3" height="164" fill="#2a2f36" opacity="0.6"/>
<rect x="569.5" y="69" width="4" height="6" fill="#3a3038"/><rect x="569.5" y="79" width="4" height="7" fill="#4a2838"/>
<rect x="571.5" y="101" width="5" height="5" fill="#c8d0d8"/>
<rect x="572.3" y="112" width="2" height="10" fill="#c07060" opacity="0.8"/>
<circle cx="559" cy="164.5" r="4" fill="#3a8fe0" stroke="#9cc8f0" stroke-width="0.7"/>
<rect x="560.5" y="168" width="14.5" height="3.4" fill="#20242a"/><rect x="561.5" y="168.8" width="3" height="1.8" fill="#e8e8e8"/><rect x="565.5" y="168.8" width="3" height="1.8" fill="#e8e8e8"/><rect x="569.5" y="168.8" width="3" height="1.8" fill="#e8e8e8"/>
<rect x="270" y="181.3" width="308" height="10" fill="#e6eaf2"/>
<rect x="405" y="181.3" width="173" height="10" fill="#e9e6f0"/>
<rect x="382.5" y="183.5" width="3.3" height="3.3" rx="0.5" fill="#2a7fd8"/>
<rect x="387.9" y="183.5" width="3.3" height="3.3" rx="0.5" fill="#d0a030"/>
<rect x="393.2" y="183.5" width="3.3" height="3.3" rx="0.5" fill="#202020"/>
<rect x="398.6" y="183.5" width="3.3" height="3.3" rx="0.5" fill="#f0c030"/>
<rect x="403.9" y="183.5" width="3.3" height="3.3" rx="0.5" fill="#1c4a2c"/>
<rect x="409.2" y="183.5" width="3.3" height="3.3" rx="0.5" fill="#a0a0a8"/>
<rect x="414.6" y="183.5" width="3.3" height="3.3" rx="0.5" fill="#d04040"/>
<rect x="419.9" y="183.5" width="3.3" height="3.3" rx="0.5" fill="#e03030"/>
<rect x="425.3" y="183.5" width="3.3" height="3.3" rx="0.5" fill="#3090d0"/>
<rect x="430.6" y="183.5" width="3.3" height="3.3" rx="0.5" fill="#c05030"/>
<rect x="436.0" y="183.5" width="3.3" height="3.3" rx="0.5" fill="#e03050"/>
<rect x="441.4" y="183.5" width="3.3" height="3.3" rx="0.5" fill="#30a0d0"/>
<rect x="446.7" y="183.5" width="3.3" height="3.3" rx="0.5" fill="#181818"/>
<rect x="511.0" y="184.3" width="2" height="2" fill="#9090a0" opacity="0.8"/>
<rect x="515.2" y="184.3" width="2" height="2" fill="#50a060" opacity="0.8"/>
<rect x="519.4" y="184.3" width="2" height="2" fill="#303030" opacity="0.8"/>
<rect x="523.6" y="184.3" width="2" height="2" fill="#9090a0" opacity="0.8"/>
<rect x="527.8" y="184.3" width="2" height="2" fill="#50a060" opacity="0.8"/>
<rect x="532.0" y="184.3" width="2" height="2" fill="#9090a0" opacity="0.8"/>
<rect x="536.2" y="184.3" width="2" height="2" fill="#d06040" opacity="0.8"/>
<rect x="540.4" y="184.3" width="2" height="2" fill="#9090a0" opacity="0.8"/>
<rect x="544.6" y="184.3" width="2" height="2" fill="#4080d0" opacity="0.8"/>
<rect x="548.8" y="184.3" width="2" height="2" fill="#9090a0" opacity="0.8"/>
<rect x="553.0" y="184.3" width="2" height="2" fill="#e0c040" opacity="0.8"/>
<rect x="557.2" y="184.3" width="2" height="2" fill="#e0c040" opacity="0.8"/>
<rect x="561" y="183.5" width="9" height="1.2" fill="#606878" opacity="0.7"/><rect x="562" y="185.8" width="7" height="1.2" fill="#606878" opacity="0.7"/>
<rect x="268" y="18" width="8.5" height="173" fill="#0b0b0b"/>
<rect x="575.4" y="18" width="8" height="173" fill="#0b0b0b"/>
<rect x="574.2" y="18" width="1.3" height="164" fill="#9aa4ae" opacity="0.7"/>
<rect x="276.5" y="96" width="1.6" height="14" fill="#30343a"/>
</g></g>
</svg>
<!--/PV-->
<div id="blue" class="abs"></div>
<div id="layer" class="abs"></div>
<div id="tl" class="abs"></div>
<div id="ruler" class="abs"></div>
<div id="ctrl" class="abs"></div>
<!--UI-->
<svg class="abs" id="ui" style="left:0;top:0" width="600" height="439" viewBox="0 0 600 439">
<rect x="5" y="4" width="11" height="11" fill="#111"/>
<text x="10.5" y="12.7" text-anchor="middle" font-family="Liberation Sans, sans-serif" font-size="8.6" font-weight="bold" font-style="italic" fill="#ffffff">N</text>
<path d="M518.7,10 H526.3" stroke="#222" stroke-width="0.9"/>
<rect x="550" y="6.6" width="6.6" height="6.6" rx="0.8" fill="none" stroke="#222" stroke-width="0.9"/>
<path d="M581.5,6.8 L588,13.2 M588,6.8 L581.5,13.2" stroke="#222" stroke-width="0.9"/>
<circle cx="243" cy="26.2" r="2.5" fill="none" stroke="#6c6c6c" stroke-width="0.9"/><path d="M241.2,28 L238,31.6" stroke="#6c6c6c" stroke-width="0.9"/>
<rect x="252.3" y="27.1" width="8.6" height="8.6" fill="#0a0a0a" stroke="#e8e8e8" stroke-width="0.9"/>
<ellipse cx="257.5" cy="30.4" rx="2.9" ry="2.3" fill="#f4f4f4"/><path d="M255.6,32 L253.3,34.5" stroke="#f4f4f4" stroke-width="1.5"/><rect x="256" y="29.9" width="3" height="0.9" fill="#222"/>
<circle cx="254.2" cy="194.3" r="0.9" fill="#fff"/>
<circle cx="256.5" cy="194.3" r="0.9" fill="#fff"/>
<circle cx="258.8" cy="194.3" r="0.9" fill="#fff"/>
<path d="M271.3,194 Q274.8,190.4 278.3,194 Q274.8,197.6 271.3,194 Z" fill="none" stroke="#fff" stroke-width="0.8"/><circle cx="274.8" cy="194" r="1.2" fill="#fff"/>
<circle cx="292.4" cy="194" r="2.3" fill="none" stroke="#fff" stroke-width="0.9"/>
<path d="M308,191.2 H313.2" stroke="#fff" stroke-width="0.9"/>
<path d="M308,194 H313.2" stroke="#fff" stroke-width="0.9"/>
<path d="M308,196.8 H313.2" stroke="#fff" stroke-width="0.9"/>
<path d="M326,197 L326.6,195 L330.2,191.2 L331.6,192.6 L328,196.4 Z" fill="none" stroke="#fff" stroke-width="0.8"/>
<path d="M571.2,193 H574.2 Q576.4,193 576.4,195.2 V197" fill="none" stroke="#fff" stroke-width="1"/><path d="M572.8,191 L570.4,193 L572.8,195 Z" fill="#fff"/>
<g opacity="0.4"><path d="M597,193 H594 Q591.8,193 591.8,195.2 V197" fill="none" stroke="#fff" stroke-width="1"/><path d="M595.4,191 L597.8,193 L595.4,195 Z" fill="#fff"/></g>
<rect x="250" y="198.7" width="16" height="22" fill="#1b1d1d"/>
<rect x="252.6" y="205.6" width="7.6" height="6" fill="none" stroke="#e8e8e8" stroke-width="0.9"/><path d="M253.2,210.8 L255.4,208.4 L257,210 L258.2,209 L259.8,210.8 Z" fill="#e8e8e8"/><rect x="253.4" y="206.4" width="6" height="1.2" fill="#e8e8e8"/>
<polyline points="253.4,215.6 256.4,218.2 259.4,215.6" fill="none" stroke="#e8e8e8" stroke-width="1"/>
<rect x="267.6" y="201.3" width="15.4" height="17.5" fill="#3a3b3b"/>
<rect x="287.3" y="201" width="17.8" height="17.6" fill="#0a0a0a" stroke="#d8d8d8" stroke-width="0.7"/>
<rect x="287.8" y="201.5" width="7.5" height="5.5" fill="#d5d8da"/><rect x="287.8" y="214" width="7" height="4.2" fill="#f4f4f4"/>
<rect x="287.8" y="207" width="16.8" height="7" fill="#6a6a6a"/>
<rect x="297" y="202.3" width="6" height="1" fill="#aaa" opacity="0.6"/>
<path d="M309.8,201.3 H326.8 V214.8 Q326.8,218.8 322.8,218.8 H309.8 Z" fill="#ee3840"/>
<path d="M315.6,210.2 H321 M318.3,207.5 V212.9" stroke="#fff" stroke-width="1"/>
<rect x="243.3" y="191.6" width="23.1" height="32.2" fill="none" stroke="#e41e1e" stroke-width="2"/>
<rect x="269.2" y="419" width="1.4" height="3.7" fill="#d4e0a0"/>
<rect x="299.3" y="416.2" width="1.4" height="6.5" fill="#e4ebc4"/>
<rect x="329.4" y="419" width="1.4" height="3.7" fill="#d4e0a0"/>
<rect x="359.5" y="419" width="1.4" height="3.7" fill="#d4e0a0"/>
<rect x="389.6" y="419" width="1.4" height="3.7" fill="#d4e0a0"/>
<rect x="419.7" y="419" width="1.4" height="3.7" fill="#d4e0a0"/>
<rect x="449.8" y="416.2" width="1.4" height="6.5" fill="#e4ebc4"/>
<rect x="479.9" y="419" width="1.4" height="3.7" fill="#d4e0a0"/>
<rect x="510.0" y="419" width="1.4" height="3.7" fill="#d4e0a0"/>
<rect x="540.1" y="419" width="1.4" height="3.7" fill="#d4e0a0"/>
<rect x="570.2" y="419" width="1.4" height="3.7" fill="#d4e0a0"/>
<circle cx="510.7" cy="421" r="1.1" fill="#f0f4e0"/>
<rect x="251.4" y="427.4" width="2.2" height="8" fill="#f0f0f0"/>
<rect x="270.2" y="427.8" width="1.4" height="7.4" fill="#f0f0f0"/><path d="M278,427.8 L272,431.5 L278,435.2 Z" fill="#f0f0f0"/>
<path d="M296.6,427 L304,431.6 L296.6,436.2 Z" fill="#f6f6f6"/>
<rect x="328" y="427.8" width="1.4" height="7.4" fill="#f0f0f0"/><path d="M321.8,427.8 L327.8,431.5 L321.8,435.2 Z" fill="#f0f0f0"/>
<rect x="345.8" y="427.8" width="1.8" height="7.4" fill="#f0f0f0"/><path d="M349,427.8 L355.4,431.5 L349,435.2 Z" fill="#f0f0f0"/>
<rect x="388" y="430.1" width="59" height="1.9" fill="#f4f4f4"/><circle cx="388.6" cy="431.2" r="3.5" fill="#fafafa"/>
<path d="M570.5,427.8 H575.3 V435.2 L572.9,433.4 L570.5,435.2 Z M570.5,431 H575.3" fill="none" stroke="#e8e8e8" stroke-width="0.9"/>
<circle cx="592.2" cy="431.5" r="3.9" fill="none" stroke="#e8e8e8" stroke-width="0.9"/>
</svg>
<div class="abs" style="left:592.2px;top:431.7px;transform:translate(-50%,-50%);font-size:6.5px;line-height:6px;font-weight:bold;color:#e8e8e8">?</div>
<div class="abs rl" style="left:300px;">0:00:23:25</div>
<div class="abs rl" style="left:450.5px;">0:00:35:23</div>
<div class="abs rl" style="left:577.3px;transform:none">0:00:47:21</div>
<div class="abs" style="left:335px;top:190.3px;font-size:4.8px;line-height:7px;color:#cfe2fa;white-space:nowrap;font-weight:bold">编辑</div>
<div class="abs" style="left:275.3px;top:206.8px;transform:translateX(-50%);font-size:4.2px;line-height:6px;color:#a0a0a0;white-space:nowrap;font-weight:bold">新节点</div>
<div class="abs" style="left:296.2px;top:207.4px;transform:translateX(-50%);font-size:4.4px;line-height:6px;color:#f0f0f0;white-space:nowrap;font-weight:bold">视频</div>

<!--/UI-->
</body></html>
